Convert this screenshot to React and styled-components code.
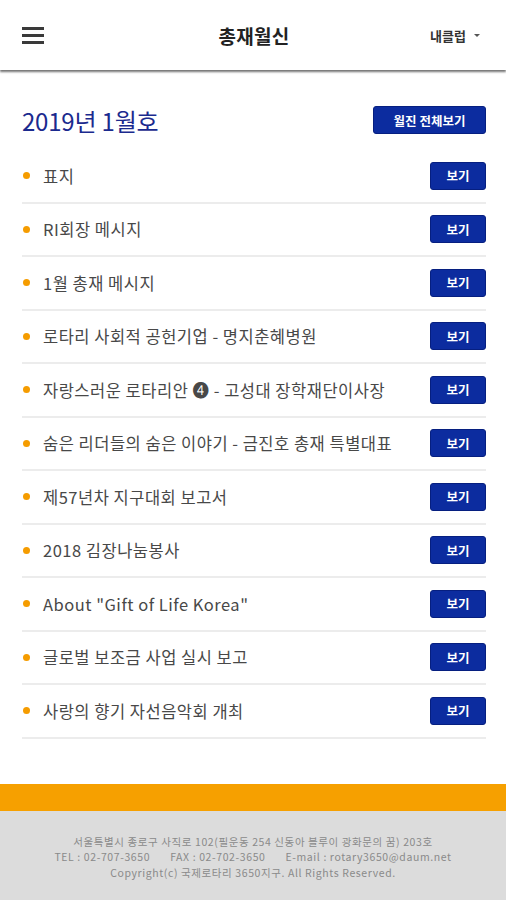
import React from "react";
import styled, { createGlobalStyle } from "styled-components";

const items = [
    "표지",
    "RI회장 메시지",
    "1월 총재 메시지",
    "로타리 사회적 공헌기업 - 명지춘혜병원",
    "자랑스러운 로타리안 ❹ - 고성대 장학재단이사장",
    "숨은 리더들의 숨은 이야기 - 금진호 총재 특별대표",
    "제57년차 지구대회 보고서",
    "2018 김장나눔봉사",
    "About \"Gift of Life Korea\"",
    "글로벌 보조금 사업 실시 보고",
    "사랑의 향기 자선음악회 개최",
];

export default function App() {
    return (
        <>
            <GlobalStyle />
            <Page>
                <Header>
                    <Menu aria-label="menu">
                        <Bar />
                        <Bar />
                        <Bar />
                    </Menu>
                    <Title>총재월신</Title>
                    <Club>
                        내클럽 <Caret />
                    </Club>
                </Header>
                <Main>
                    <IssueHead>
                        <IssueTitle>2019년 1월호</IssueTitle>
                        <BlueButton $wide>월진 전체보기</BlueButton>
                    </IssueHead>
                    <List>
                        {items.map((text, i) => (
                            <Row key={i}>
                                <Dot />
                                <RowText>{text}</RowText>
                                <BlueButton>보기</BlueButton>
                            </Row>
                        ))}
                    </List>
                </Main>
                <OrangeBand />
                <Footer>
                    <div>서울특별시 종로구 사직로 102(필운동 254 신동아 블루이 광화문의 꿈) 203호</div>
                    <FooterLine>
                        <span>TEL : 02-707-3650</span>
                        <span>FAX : 02-702-3650</span>
                        <span>E-mail : rotary3650@daum.net</span>
                    </FooterLine>
                    <div>Copyright(c) 국제로타리 3650지구. All Rights Reserved.</div>
                </Footer>
            </Page>
        </>
    );
}

const GlobalStyle = createGlobalStyle`
    body {
        margin: 0;
        background: #fff;
        font-family: "Noto Sans CJK KR", "Noto Sans", "DejaVu Sans", sans-serif;
    }
`;

const Page = styled.div`
    width: 506px;
    min-height: 900px;
    display: flex;
    flex-direction: column;
`;

const Header = styled.header`
    height: 70px;
    display: flex;
    align-items: center;
    justify-content: space-between;
    padding: 0 26px 0 22px;
    background: #fff;
    box-shadow: 0 2px 2px rgba(0, 0, 0, 0.55);
    position: relative;
    z-index: 1;
`;

const Menu = styled.div`
    width: 80px;
    display: flex;
    flex-direction: column;
    gap: 4px;
`;

const Bar = styled.span`
    display: block;
    width: 22px;
    height: 3px;
    background: #3a3a3a;
`;

const Title = styled.h1`
    margin: 0 0 0 6px;
    font-size: 19px;
    font-weight: 700;
    color: #222;
    letter-spacing: 0.3px;
`;

const Club = styled.div`
    width: 80px;
    display: flex;
    align-items: center;
    justify-content: flex-end;
    gap: 8px;
    font-size: 13px;
    font-weight: 700;
    color: #333;
`;

const Caret = styled.span`
    width: 0;
    height: 0;
    border-left: 3px solid transparent;
    border-right: 3px solid transparent;
    border-top: 3px solid #555;
`;

const Main = styled.main`
    padding: 36px 20px 0 22px;
    margin-bottom: 45px;
`;

const IssueHead = styled.div`
    height: 28px;
    display: flex;
    align-items: center;
    justify-content: space-between;
    margin-bottom: 16px;
`;

const IssueTitle = styled.h2`
    margin: 0;
    font-size: 24px;
    font-weight: 400;
    color: #1b2a8e;
    letter-spacing: -0.2px;
`;

const BlueButton = styled.button`
    height: 28px;
    width: ${(p) => (p.$wide ? "113px" : "56px")};
    border: 1px solid #061f80;
    border-radius: 3px;
    background: #0c2c9f;
    color: #fff;
    font-family: inherit;
    font-size: 12.5px;
    font-weight: 700;
    padding: 0;
    flex-shrink: 0;
`;

const List = styled.ul`
    list-style: none;
    margin: 0;
    padding: 0;
`;

const Row = styled.li`
    height: 51.5px;
    display: flex;
    align-items: center;
    border-bottom: 2px solid #ececec;
`;

const Dot = styled.span`
    width: 7px;
    height: 7px;
    border-radius: 50%;
    background: #f59c00;
    margin: 0 13px 0 1px;
    flex-shrink: 0;
`;

const RowText = styled.span`
    flex: 1;
    font-size: 16.5px;
    color: #484848;
    letter-spacing: 0.5px;
    white-space: nowrap;
`;

const OrangeBand = styled.div`
    height: 27px;
    background: #f6a000;
`;

const Footer = styled.footer`
    flex: 1;
    background: #dcdcdc;
    padding: 23px 0 20px;
    text-align: center;
    font-size: 10.5px;
    line-height: 15.5px;
    color: #8a8a8a;
    letter-spacing: 0.6px;
`;

const FooterLine = styled.div`
    display: flex;
    justify-content: center;
    gap: 20px;
`;
